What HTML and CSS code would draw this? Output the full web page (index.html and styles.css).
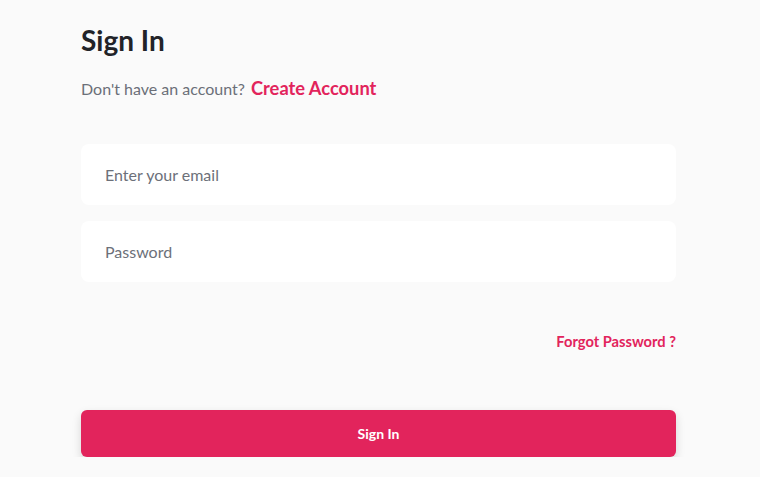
FILE: index.html
```html
<!DOCTYPE html>
<html lang="en">
<head>
<meta charset="utf-8">
<title>Sign In</title>
<link rel="stylesheet" href="styles.css">
</head>
<body>
<main class="page">
  <form class="signin">
    <h1 class="title">Sign In</h1>
    <p class="subtitle">Don't have an account? <a class="create" href="#">Create Account</a></p>
    <div class="fields">
      <input class="field" type="email" placeholder="Enter your email">
      <input class="field" type="password" placeholder="Password">
    </div>
    <div class="forgot-row"><a class="forgot" href="#">Forgot Password ?</a></div>
    <button class="submit" type="button">Sign In</button>
  </form>
</main>
</body>
</html>
```
FILE: styles.css
```css
html, body {
  margin: 0;
  padding: 0;
  background: #fafafa;
  font-family: Lato, "Liberation Sans", sans-serif;
}
.page {
  padding: 0 84px 0 81px;
}
.signin {
  display: flex;
  flex-direction: column;
  width: 595px;
}
.title {
  margin: 24px 0 0;
  font-size: 28px;
  line-height: 32px;
  font-weight: 700;
  color: #222328;
}
.subtitle {
  margin: 20px 0 0;
  font-size: 16px;
  line-height: 24px;
  color: #6b6f78;
}
.create {
  color: #e2245c;
  font-weight: 700;
  font-size: 18.3px;
  text-decoration: none;
  margin-left: 2px;
}
.fields {
  display: flex;
  flex-direction: column;
  gap: 16px;
  margin-top: 43px;
}
.field {
  box-sizing: border-box;
  height: 61px;
  border: none;
  border-radius: 8px;
  background: #ffffff;
  padding: 0 24px;
  font-family: Lato, "Liberation Sans", sans-serif;
  font-size: 16px;
  color: #333;
  outline: none;
}
.field::placeholder {
  color: #6c7079;
}
.forgot-row {
  display: flex;
  justify-content: flex-end;
  margin-top: 50px;
}
.forgot {
  color: #e2245c;
  font-weight: 700;
  font-size: 14.7px;
  line-height: 18px;
  text-decoration: none;
}
.submit {
  margin-top: 60px;
  height: 47px;
  border: none;
  border-radius: 6px;
  background: #e2245c;
  color: #ffffff;
  font-family: Lato, "Liberation Sans", sans-serif;
  font-weight: 700;
  font-size: 14px;
  box-shadow: 0 4px 10px rgba(0, 0, 0, 0.15);
  cursor: pointer;
}
```
